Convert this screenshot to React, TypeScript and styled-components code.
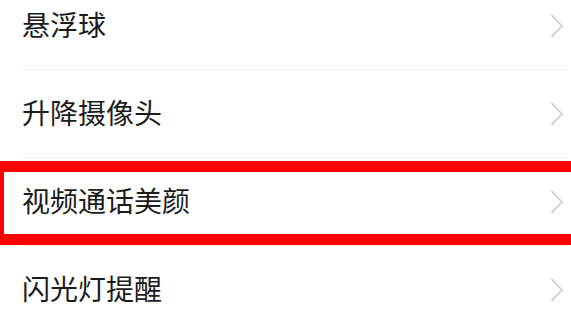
import React from "react";
import styled, { createGlobalStyle } from "styled-components";

const Global = createGlobalStyle`
  html, body {
    margin: 0;
    padding: 0;
    background: #ffffff;
    overflow: hidden;
  }
  body {
    font-family: "Noto Sans CJK SC", "Noto Sans", sans-serif;
  }
`;

const Page = styled.div`
  width: 571px;
  height: 323px;
  overflow: hidden;
  background: #ffffff;
`;

const List = styled.ul`
  list-style: none;
  margin: -18px 0 0 0;
  padding: 0;
`;

const Row = styled.li<{ $last?: boolean }>`
  position: relative;
  box-sizing: border-box;
  height: 88px;
  display: flex;
  align-items: center;
  justify-content: space-between;
  padding: 0 7px 0 22px;

  &::after {
    content: "";
    position: absolute;
    left: 20px;
    right: 3px;
    bottom: 0;
    height: 1px;
    background: ${(p) => (p.$last ? "transparent" : "#f3f3f3")};
  }
`;

const Label = styled.span`
  font-size: 28px;
  line-height: 1;
  margin-bottom: 4px;
  color: #1c1c1c;
  font-family: "Noto Sans CJK SC", "Noto Sans", sans-serif;
`;

const Highlight = styled.div`
  position: absolute;
  top: 3px;
  left: -7px;
  right: -20px;
  height: 84px;
  box-sizing: border-box;
  border: 11px solid #ff0000;
  pointer-events: none;
`;

const Chevron = () => (
  <svg width="14" height="24" viewBox="0 0 14 24" aria-hidden="true">
    <path
      d="M2 1.5 L12 12 L2 22.5"
      fill="none"
      stroke="#c6c6c6"
      strokeWidth="1.6"
      strokeLinecap="round"
      strokeLinejoin="round"
    />
  </svg>
);

const items = [
  { label: "悬浮球" },
  { label: "升降摄像头" },
  { label: "视频通话美颜", highlight: true },
  { label: "闪光灯提醒" },
];

export default function App() {
  return (
    <Page>
      <Global />
      <List>
        {items.map((it, i) => (
          <Row key={it.label} $last={i === items.length - 1}>
            <Label>{it.label}</Label>
            <Chevron />
            {it.highlight && <Highlight />}
          </Row>
        ))}
      </List>
    </Page>
  );
}
